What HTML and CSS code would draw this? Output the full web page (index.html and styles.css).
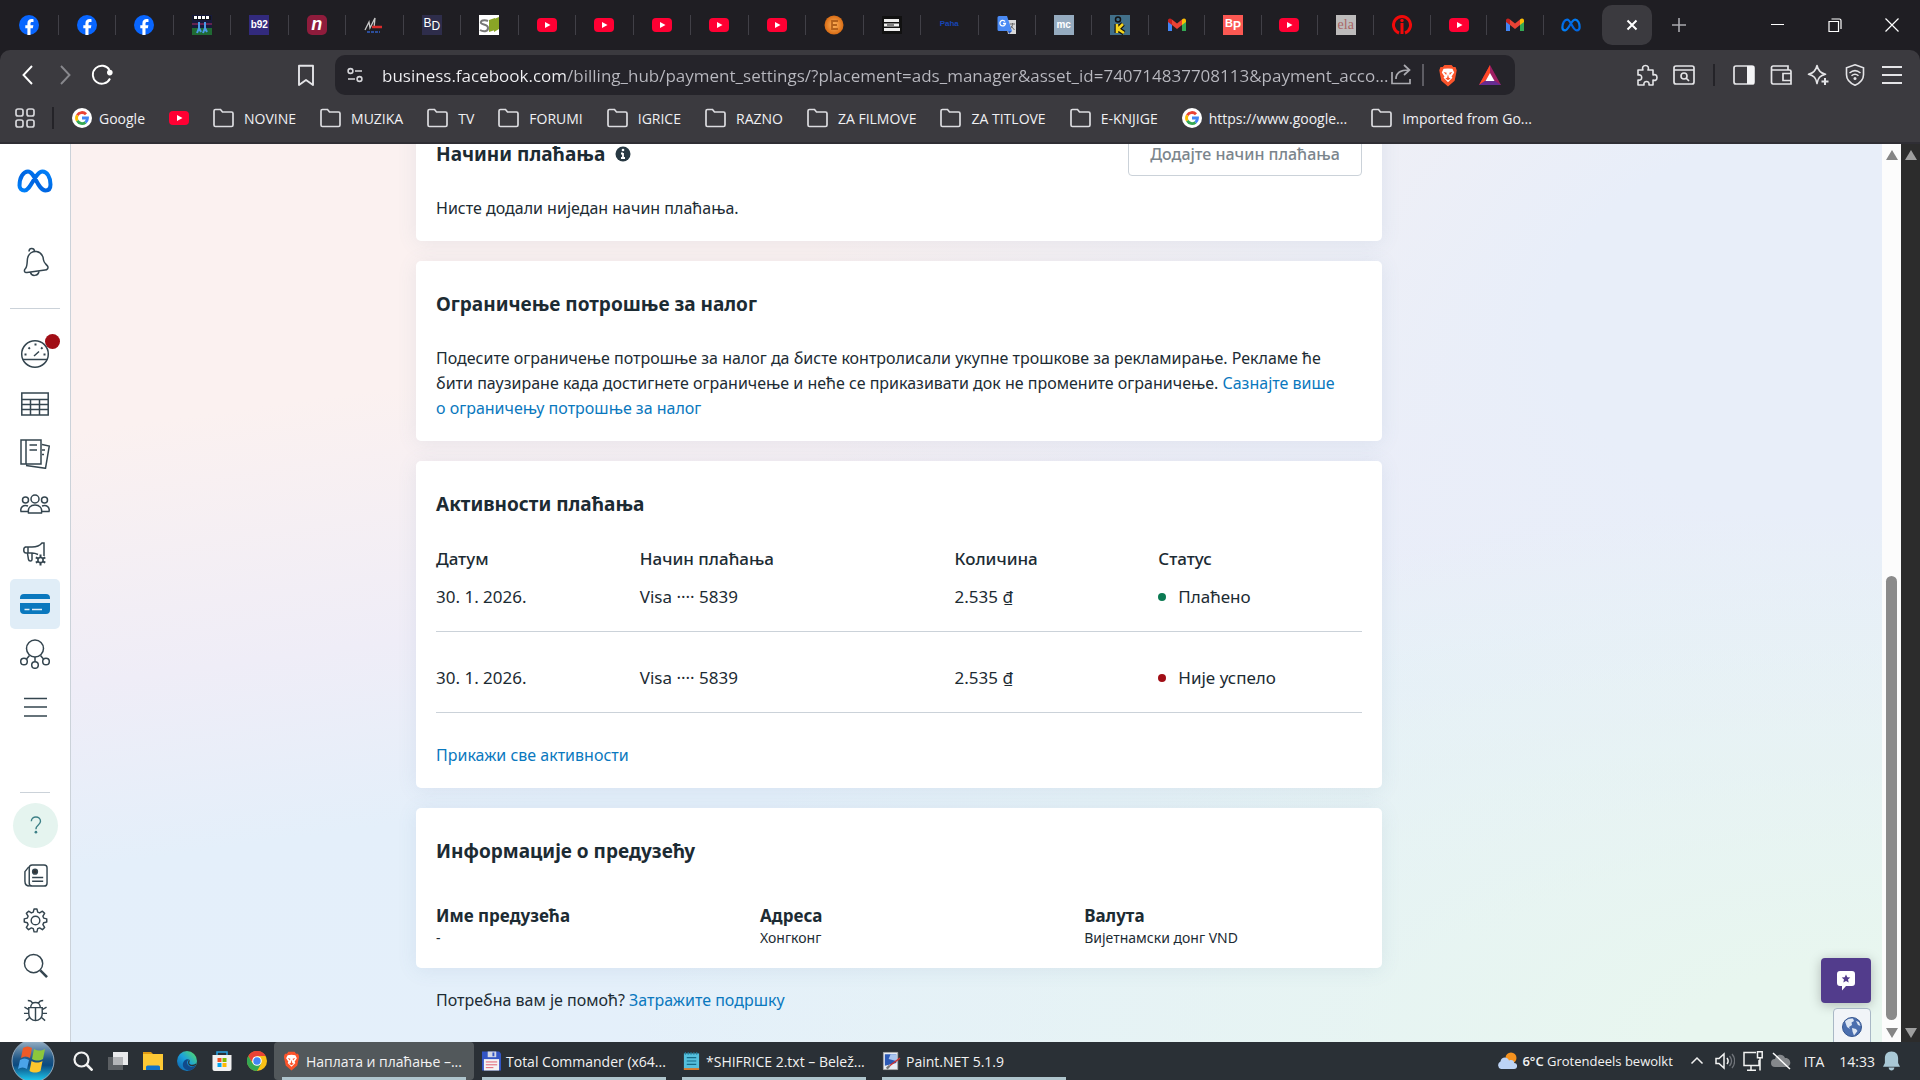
FILE: index.html
```html
<!DOCTYPE html>
<html lang="sr">
<head>
<meta charset="utf-8">
<title>Наплата и плаћање</title>
<meta name="viewport" content="width=device-width, initial-scale=1">
<link rel="stylesheet" href="styles.css">
</head>
<body>
<svg class="defs" aria-hidden="true">
  <defs>
    <linearGradient id="metaGrad" x1="0" y1="1" x2="1" y2="0"><stop offset="0" stop-color="#0082fb"/><stop offset=".45" stop-color="#0064e0"/><stop offset="1" stop-color="#0082fb"/></linearGradient>
    <linearGradient id="orb" x1="0" y1="0" x2="0" y2="1"><stop offset="0" stop-color="#9fb6c9"/><stop offset=".45" stop-color="#1f5685"/><stop offset=".6" stop-color="#0c4a80"/><stop offset="1" stop-color="#1fd3f8"/></linearGradient>
    <linearGradient id="edge" x1="0" y1="1" x2="1" y2="0"><stop offset="0" stop-color="#0c59a4"/><stop offset=".5" stop-color="#1ba0dc"/><stop offset="1" stop-color="#5be35a"/></linearGradient>
    <radialGradient id="orange"><stop offset="0" stop-color="#ffb45c"/><stop offset="1" stop-color="#d96c14"/></radialGradient>
    <symbol id="fb" viewBox="0 0 20 20"><circle cx="10" cy="10" r="10" fill="#0866ff"/><path d="M8.400 20v-6.700H6.300v-3h2.100V8.700c0-3 1.500-4.600 4.400-4.600.7 0 1.300.1 1.700.2v2.600h-1.400c-1.200 0-1.600.6-1.600 1.700v1.700h2.900l-.6 3h-2.300V20z" fill="#fff"/></symbol>
    <symbol id="yt" viewBox="0 0 20 20"><rect y="3" width="20" height="14" rx="4" fill="#ff0033"/><path d="M8 7v6l5.500-3z" fill="#fff"/></symbol>
    <symbol id="gmail" viewBox="0 0 20 20"><path d="M1 5v11h4V9z" fill="#4285f4"/><path d="M15 9v7h4V5z" fill="#34a853"/><path d="M15 4.500V10l4-3V5.500c0-2.300-2.400-2.800-4-1z" fill="#fbbc04"/><path d="M5 10V4.500l5 4 5-4V10l-5 4z" fill="#ea4335"/><path d="M1 5.500C1 3.200 3.400 2.700 5 4.500V10L1 7z" fill="#c5221f"/></symbol>
    <symbol id="goog" viewBox="0 0 20 20"><circle cx="10" cy="10" r="10" fill="#fff"/><g fill="none" stroke-width="2.800"><path d="M14 6.200A5.500 5.500 0 0 0 5.300 7.200" stroke="#ea4335"/><path d="M5.300 7.200a5.500 5.500 0 0 0 0 5.600" stroke="#fbbc04"/><path d="M5.300 12.800a5.500 5.500 0 0 0 8.200 1.500" stroke="#34a853"/><path d="M13.500 14.300A5.500 5.500 0 0 0 15.500 10H10" stroke="#4285f4"/></g></symbol>
    <symbol id="folder" viewBox="0 0 21 20"><path d="M1 17V3a1.500 1.500 0 0 1 1.500-1.500h5L9.500 4h9A1.500 1.500 0 0 1 20 5.500V17a1.500 1.500 0 0 1-1.500 1.500h-16A1.500 1.500 0 0 1 1 17z" fill="none" stroke="#dcdce0" stroke-width="1.700"/></symbol>
    <symbol id="meta" viewBox="0 0 36 24"><path d="M2.500 16.500C2.500 8 6.500 2.500 11 2.500C18 2.500 20.500 21.500 28.500 21.500C32 21.500 33.500 19 33.500 15.500C33.500 8 30 2.500 25.500 2.500C18 2.500 14 21.500 7.500 21.500C4.500 21.500 2.500 19.500 2.500 16.500Z" fill="none" stroke="url(#metaGrad)" stroke-width="4"/></symbol>
    <symbol id="brave" viewBox="0 0 20 26"><path d="M6 1h8l2 2.500h2.500L20 7l-2.500 12L10 25.500 2.500 19 0 7l1.500-3.500H4z" fill="#fb542b"/><path d="M10 5l5 .5 2 4-3 4.500 1 1.500-5 5-5-5 1-1.500-3-4.500 2-4z" fill="#fff"/><path d="M5 9l3.500 1L8 12.500zM15 9l-3.500 1 .5 2.500zM10 11.500l1 4 2 1-3 2-3-2 2-1z" fill="#fb542b"/></symbol>
  </defs>
</svg>

<header class="browser">
  <div class="tabstrip">
    <div class="tabs tabs-a">
      <button class="tab" aria-label="Facebook"><svg><use href="#fb"/></svg></button>
      <button class="tab" aria-label="Facebook"><svg><use href="#fb"/></svg></button>
      <button class="tab" aria-label="Facebook"><svg><use href="#fb"/></svg></button>
      <button class="tab" aria-label="Sport"><svg viewBox="0 0 20 20"><path d="M0 0h20v20H0z" fill="#171a3c"/><path d="M0 13h20v7H0z" fill="#1f6a33"/><path d="M1 1h18v4H1z" fill="#10131a"/><path d="M2 2.500h16" stroke="#fff" stroke-width="3" stroke-dasharray="3 1"/><path d="M0 9h20" stroke="#b02a63"/><path d="M7 7v6l-2 5M7 13l2 4M13 7v6l-2 5m2-5 2 4" stroke="#4b9ae8" stroke-width="2" fill="none"/></svg></button>
      <button class="tab" aria-label="b92"><span class="fav fav-b92">b92</span></button>
      <button class="tab" aria-label="n"><span class="fav fav-n">n</span></button>
      <button class="tab" aria-label="Majstorija"><svg viewBox="0 0 20 20"><path d="M1 15L5 7l1 6 5-10-1 10" fill="none" stroke="#c9c9c9" stroke-width="1.300"/><path d="M8 12h10" stroke="#d92b2b" stroke-width="2.500"/><path d="M3 17h13" stroke="#2c4e9b" stroke-width="2" stroke-dasharray="3 1"/></svg></button>
      <button class="tab" aria-label="BD"><span class="fav fav-bd">B<sub>D</sub></span></button>
      <button class="tab" aria-label="S"><svg viewBox="0 0 20 20"><path d="M0 0h20v20H0z" fill="#fff"/><path d="M10 5l6-2v12l-6 2zM15 4l5-2v12l-5 3z" fill="#8aa526"/><path d="M9 6C5 4 1 6 2 8s7 1 7 5-5 4-8 2" fill="none" stroke="#777" stroke-width="2"/></svg></button>
      <button class="tab" aria-label="YouTube"><svg><use href="#yt"/></svg></button>
      <button class="tab" aria-label="YouTube"><svg><use href="#yt"/></svg></button>
      <button class="tab" aria-label="YouTube"><svg><use href="#yt"/></svg></button>
      <button class="tab" aria-label="YouTube"><svg><use href="#yt"/></svg></button>
      <button class="tab" aria-label="YouTube"><svg><use href="#yt"/></svg></button>
      <button class="tab" aria-label="E"><svg viewBox="0 0 20 20"><circle cx="10" cy="10" r="9.500" fill="url(#orange)"/><path d="M14 6H8v8h6M8 10h5" fill="none" stroke="#b3611c" stroke-width="1.800"/></svg></button>
      <button class="tab" aria-label="Z"><svg viewBox="0 0 20 20"><path d="M0 1h20v18H0z" fill="#111"/><path d="M2 5.500h15M2 14.500h16M2 10h15" stroke="#eee" stroke-width="2.800"/><path d="M5 10h7" stroke="#111"/></svg></button>
      <button class="tab" aria-label="Paha"><span class="fav fav-paha">Paha</span></button>
      <button class="tab" aria-label="Google Translate"><svg viewBox="0 0 20 20"><path d="M8 5h11v14H11z" fill="#d8d8d8"/><path d="M2 1h8l5 15H2a1.500 1.500 0 0 1-1.500-1.500v-12A1.500 1.500 0 0 1 2 1z" fill="#4a8af4"/><path d="M15 16l-3 3-1-3z" fill="#2a5bc0"/><path d="M8 6.500A2.800 2.800 0 1 0 8.500 8.500H6" fill="none" stroke="#fff" stroke-width="1.300"/><path d="M13 9h5m-2.500-1v1.500c0 2-2 4-2 4m.5-2.500l3.500 4" fill="none" stroke="#666"/></svg></button>
    </div>
    <div class="tabs tabs-b">
      <button class="tab" aria-label="MC"><span class="fav fav-mc">mc</span></button>
      <button class="tab" aria-label="K"><svg viewBox="0 0 20 20"><path d="M0 0h20v20H0z" fill="#42708a"/><path d="M7 9v9M13 9l-5 5 6 4" stroke="#111" stroke-width="5" fill="none"/><path d="M7 9v9M13 9l-5 5 6 4" stroke="#f4d51e" stroke-width="2.600" fill="none"/><circle cx="8" cy="4.500" r="2.500" fill="none" stroke="#111" stroke-width="1.500"/></svg></button>
      <button class="tab" aria-label="Gmail"><svg><use href="#gmail"/></svg></button>
      <button class="tab" aria-label="BP"><span class="fav fav-bp">B<sub>P</sub></span></button>
      <button class="tab" aria-label="YouTube"><svg><use href="#yt"/></svg></button>
      <button class="tab" aria-label="ela"><span class="fav fav-ela">ela</span></button>
      <button class="tab" aria-label="i"><svg viewBox="0 0 20 20"><path d="M7 18A8.500 8.500 0 1 1 13 18" fill="none" stroke="#f10a0a" stroke-width="3"/><path d="M10 8v11" stroke="#f10a0a" stroke-width="3"/><circle cx="10" cy="5.500" r="1.700" fill="#f10a0a"/></svg></button>
      <button class="tab" aria-label="YouTube"><svg><use href="#yt"/></svg></button>
      <button class="tab" aria-label="Gmail"><svg><use href="#gmail"/></svg></button>
      <button class="tab" aria-label="Meta"><svg><use href="#meta"/></svg></button>
    </div>
    <button class="tab-active" aria-label="Затвори картицу"><svg viewBox="0 0 12 12"><path d="M1.500 1.500l9 9m0-9l-9 9" stroke="#fff" stroke-width="2"/></svg></button>
    <button class="tab-new" aria-label="Нова картица"><svg viewBox="0 0 14 14"><path d="M7 0v14M0 7h14" stroke="#a9a9ae" stroke-width="1.600"/></svg></button>
    <div class="win">
      <button aria-label="Minimize"><svg viewBox="0 0 14 14"><path d="M0 6.500h13" stroke="#fff"/></svg></button>
      <button aria-label="Restore"><svg viewBox="0 0 14 14"><path d="M1 3.500h9.500v10H1zM3.500 1h8a1.500 1.500 0 0 1 1.500 1.500V11" fill="none" stroke="#fff" stroke-width="1.200"/></svg></button>
      <button aria-label="Close"><svg viewBox="0 0 14 14"><path d="M.5.5l13 13m0-13l-13 13" stroke="#fff" stroke-width="1.200"/></svg></button>
    </div>
  </div>

  <div class="toolbar">
    <div class="nav">
      <button aria-label="Back"><svg viewBox="0 0 22 22"><path d="M15 2L6.500 11 15 20" fill="none" stroke="#fff" stroke-width="1.900"/></svg></button>
      <button aria-label="Forward"><svg viewBox="0 0 22 22"><path d="M7 2l8.500 9L7 20" fill="none" stroke="#88888d" stroke-width="1.900"/></svg></button>
      <button aria-label="Reload"><svg viewBox="0 0 22 22"><path d="M19 14.500A9 9 0 1 1 18.500 6" fill="none" stroke="#fff" stroke-width="1.900"/><circle cx="18.800" cy="8.600" r="2.800" fill="#fff"/></svg></button>
      <button class="mark" aria-label="Bookmark"><svg viewBox="0 0 22 22"><path d="M4 1.800h14V21l-7-5-7 5z" fill="none" stroke="#e4e4e7" stroke-width="1.900" stroke-linejoin="round"/></svg></button>
    </div>
    <div class="address">
      <svg class="tune" viewBox="0 0 16 16"><g fill="none" stroke="#d6d6da" stroke-width="1.600"><circle cx="3.500" cy="4" r="2.400"/><path d="M8 4h7M1 12h7"/><circle cx="12.500" cy="12" r="2.400"/></g></svg>
      <input class="url" type="text" aria-label="Адреса" value="business.facebook.com/billing_hub/payment_settings/?placement=ads_manager&amp;asset_id=740714837708113&amp;payment_acco...">
      <svg class="share" viewBox="0 0 22 22"><path d="M2 8v11.500h18V15M6 15c0-6 4-9 13-9m-5-5l5.500 5-5.500 5" fill="none" stroke="#aaaab0" stroke-width="1.700"/></svg>
      <i class="bar light"></i>
      <svg class="shield" viewBox="0 0 20 26"><use href="#brave"/></svg>
      <svg class="bat" viewBox="0 0 22 20"><path d="M11 0l11 20H0z" fill="#9e1f63"/><path d="M11 0v9l-5 7L0 20z" fill="#ff4724"/><path d="M0 20l6-4h10l6 4z" fill="#662d91"/><path d="M11 8l4.500 8h-9z" fill="#fff"/></svg>
    </div>
    <div class="ext">
      <button aria-label="Extensions"><svg viewBox="0 0 22 22"><path d="M2 6h5c-1.200-2.500 0-4.500 2.500-4.500S13.200 3.500 12 6h5v5c2.500-1 4 .2 4 2.500S19.500 17 17 16v5h-4c.5-2.500-1-3.500-2.500-3.500S7.500 18.500 8 21H2v-5c2.500.6 3.700-.6 3.700-2.500S4.500 10.500 2 11z" fill="none" stroke="#e4e4e7" stroke-width="1.600" stroke-linejoin="round"/></svg></button>
      <button aria-label="Search"><svg viewBox="0 0 22 22"><rect x="1" y="2" width="20" height="18" rx="2" fill="none" stroke="#e4e4e7" stroke-width="1.700"/><path d="M1 6h20M13 14l3 3" stroke="#e4e4e7" stroke-width="1.700"/><circle cx="11" cy="12" r="3" fill="none" stroke="#e4e4e7" stroke-width="1.600"/></svg></button>
      <i class="bar dark"></i>
      <button aria-label="Sidebar"><svg viewBox="0 0 22 22"><rect x="1" y="2" width="20" height="18" rx="2" fill="none" stroke="#e4e4e7" stroke-width="1.700"/><path d="M14 2h7v18h-7z" fill="#f4f4f6"/></svg></button>
      <button aria-label="Wallet"><svg viewBox="0 0 22 22"><path d="M1.500 6h18A1.500 1.500 0 0 1 21 7.500V20H3a1.800 1.800 0 0 1-1.500-1.500V4A1.800 1.800 0 0 1 3 2h15v4M21 9.500h-8v7h8" fill="none" stroke="#e4e4e7" stroke-width="1.700"/></svg></button>
      <button aria-label="Leo"><svg viewBox="0 0 22 22"><path d="M10 1.500c1 5 3 7.500 8.500 8.800C13 11.600 11 14 10 19.500 9 14 7 11.600 1.500 10.300 7 9 9 6.500 10 1.500z" fill="none" stroke="#e4e4e7" stroke-width="1.600" stroke-linejoin="round"/><path d="M18 14v7m-3.500-3.500h7" stroke="#e4e4e7" stroke-width="2"/></svg></button>
      <button aria-label="VPN"><svg viewBox="0 0 22 22"><path d="M11 .8l8.500 3v7c0 5-4 8.500-8.500 10.500C6.500 19.300 2.500 15.800 2.500 10.800v-7z" fill="none" stroke="#e4e4e7" stroke-width="1.600"/><path d="M5.500 9c3.500-3 7.500-3 11 0M7.500 11.800c2.200-2 4.800-2 7 0" fill="none" stroke="#e4e4e7" stroke-width="1.500"/><circle cx="11" cy="14.500" r="1.500" fill="#e4e4e7"/></svg></button>
      <button aria-label="Menu"><svg viewBox="0 0 22 22"><path d="M1 3h20M1 11h20M1 19h20" stroke="#e4e4e7" stroke-width="2"/></svg></button>
    </div>
  </div>

  <nav class="bookmarks">
    <button class="apps" aria-label="Apps"><svg viewBox="0 0 20 20"><g fill="none" stroke="#d6d6da" stroke-width="1.700"><rect x="1" y="1" width="7" height="7" rx="2"/><rect x="12" y="1" width="7" height="7" rx="2"/><rect x="1" y="12" width="7" height="7" rx="2"/><rect x="12" y="12" width="7" height="7" rx="2"/></g></svg></button>
    <i class="bar dark"></i>
    <a class="near" href="#"><svg class="w20"><use href="#goog"/></svg>Google</a>
    <a href="#" aria-label="YouTube"><svg class="w20"><use href="#yt"/></svg></a>
    <a href="#"><svg><use href="#folder"/></svg>NOVINE</a>
    <a href="#"><svg><use href="#folder"/></svg>MUZIKA</a>
    <a href="#"><svg><use href="#folder"/></svg>TV</a>
    <a href="#"><svg><use href="#folder"/></svg>FORUMI</a>
    <a href="#"><svg><use href="#folder"/></svg>IGRICE</a>
    <a href="#"><svg><use href="#folder"/></svg>RAZNO</a>
    <a href="#"><svg><use href="#folder"/></svg>ZA FILMOVE</a>
    <a href="#"><svg><use href="#folder"/></svg>ZA TITLOVE</a>
    <a href="#"><svg><use href="#folder"/></svg>E-KNJIGE</a>
    <a class="near" href="#"><svg class="w20"><use href="#goog"/></svg>https://www.google...</a>
    <a href="#"><svg><use href="#folder"/></svg>Imported from Go...</a>
  </nav>
</header>

<div class="viewport">
  <nav class="side">
    <a class="logo" href="#" aria-label="Meta"><svg class="meta-logo"><use href="#meta"/></svg></a>
    <button class="bell" aria-label="Обавештења"><svg viewBox="0 0 30 30"><path d="M9 4.500c0-4 5-4 5.500-.5M7 25.500c-2.500.5-3.500-2-1.500-4 2-2 1.500-7 2-10C8.500 6 13 4 16.500 4.500c4 .6 6.500 4 7 8.500.4 3 2.500 4 4 6 1.300 2-.2 4-2.500 4zM10.500 25.500c1 4 7.500 4 8.500-1"/></svg></button>
    <hr class="rule">
    <button class="item" aria-label="Преглед"><svg viewBox="0 0 30 30"><circle cx="15" cy="15" r="13.300"/><path d="M2.500 20.500h25M14 17l5-4.500"/><path d="M15.500 4.500v2M8.500 8.500l1.400 1.400M22.500 8.500l-1.400 1.400M4.500 15.500h2M23.500 15.500h2" stroke-width="2"/></svg><span class="dot"></span></button>
    <button class="item" aria-label="Кампање"><svg viewBox="0 0 30 30"><path d="M1.800 4h26.400v22H1.800zM2 10.500h26M2 15.500h26M2 20.500h26M10.500 10.500V26M19.500 10.500V26"/></svg></button>
    <button class="item" aria-label="Извештаји"><svg viewBox="0 0 30 30"><path d="M1 1h20v24H1zM6 1v24M9.500 6h7.500M9.500 11h7.500M22 5.500l7.300 1.500L25.500 29.300 6 26.500M22 11h3M22 15.500h2"/></svg></button>
    <button class="item" aria-label="Публика"><svg viewBox="0 0 30 30"><circle cx="15" cy="10" r="4"/><circle cx="5.500" cy="11" r="3"/><circle cx="24.500" cy="11" r="3"/><path d="M8.500 24c-1-5 2-8 6.500-8s7.500 3 6.500 8zM8 22.500H1c-1-4 2-7 7-5.500M22 22.500h7c1-4-2-7-7-5.500"/></svg></button>
    <button class="item" aria-label="Огласи"><svg viewBox="0 0 30 30"><path d="M5 8h7c5 0 8-1.500 10-4h2v13M18 15.500C16 14.500 14 14 12 14H6c-3 0-3-6 0-6M8 8v6M7.500 14.500l1 6c.4 2 3.500 2 3.500 0v-6"/><circle cx="20.500" cy="21" r="2.600"/><path d="M20.500 15.500v3M20.500 23.500v3M15.800 18.300l2.500 1.400M22.800 22.300l2.500 1.400M15.800 23.700l2.500-1.400M22.800 19.700l2.500-1.400" stroke-width="2"/></svg></button>
    <button class="item current" aria-label="Наплата"><svg viewBox="0 0 30 30"><path d="M4 5h22a4 4 0 0 1 4 4v1H0V9a4 4 0 0 1 4-4zM0 14h30v7a4 4 0 0 1-4 4H4a4 4 0 0 1-4-4z" fill="#0a78be" stroke="none"/><path d="M4.500 20.500h5M12 20.500h10" stroke="#e0edf7"/></svg></button>
    <button class="item" aria-label="Догађаји"><svg viewBox="0 0 30 30"><circle cx="15" cy="9.500" r="8.500"/><circle cx="4" cy="22.500" r="3.300"/><circle cx="26" cy="22.500" r="3.300"/><circle cx="15" cy="26" r="3.300"/><path d="M9.500 16.500L6.500 20M20.500 16.500l3 3.500M15 18v4.500"/></svg></button>
    <button class="item" aria-label="Сви алати"><svg viewBox="0 0 30 30"><path d="M4 9.500h23M4 18h23M4 27h23"/></svg></button>
    <div class="side-end">
      <hr class="rule short">
      <button class="help" aria-label="Помоћ"><svg viewBox="0 0 30 30"><path d="M10 10c0-7 11-7 11 0 0 4.500-5.500 4.500-5.500 9.500" stroke="#3d8087" stroke-width="1.700"/><circle cx="15.500" cy="23" r="1.600" fill="#3d8087" stroke="none"/></svg></button>
      <button aria-label="Новости"><svg viewBox="0 0 26 26"><rect x="6.500" y="2" width="18.500" height="22" rx="3"/><path d="M6 4L2 9v10c0 3 2 5 5 5M9.500 15H21M9.500 19H21"/><circle cx="12.500" cy="9" r="2.500" fill="#333"/></svg></button>
      <button aria-label="Подешавања"><svg viewBox="0 0 26 26"><circle cx="13" cy="13" r="4.500"/><path d="M11.500 1h3l.8 3.300 2 .8 2.900-1.800 2.300 2.300-1.800 2.900.8 2 3.200.8v3.200l-3.200.8-.8 2 1.800 2.900-2.300 2.300-2.900-1.800-2 .8-.8 3.300h-3l-.8-3.300-2-.8-2.900 1.800-2.300-2.300 1.800-2.900-.8-2-3.200-.8v-3.200l3.200-.8.8-2-1.800-2.900 2.300-2.300 2.900 1.800 2-.8z" stroke-linejoin="round"/></svg></button>
      <button aria-label="Претрага"><svg viewBox="0 0 26 26"><circle cx="11" cy="11" r="9.500"/><path d="M18 18l7 7" stroke-width="2.600"/></svg></button>
      <button aria-label="Пријавите проблем"><svg viewBox="0 0 26 26"><path d="M6 10h14v6c0 10-14 10-14 0zM8 10c0-7 10-7 10 0M13 10v13M10 5.500C9 3 7 2.500 5 2.500M16 5.500c1-2.500 3-3 5-3M6 12L1.500 9.500M6 16H1M7 20l-4 3.500M20 12l4.500-2.500M20 16h5M19 20l4 3.500"/></svg></button>
    </div>
  </nav>

  <main class="scene">
    <div class="column">
      <section class="card">
        <header><h2>Начини плаћања</h2><svg class="info" viewBox="0 0 16 16"><circle cx="8" cy="8" r="7.500" fill="#283943"/><path d="M8 7v5M6 7.500h2M6 12h4" stroke="#fff" stroke-width="1.800"/><circle cx="8" cy="4" r="1.300" fill="#fff"/></svg><button class="add">Додајте начин плаћања</button></header>
        <p>Нисте додали ниједан начин плаћања.</p>
      </section>
      <section class="card">
        <header><h2>Ограничење потрошње за налог</h2></header>
        <p>Подесите ограничење потрошње за налог да бисте контролисали укупне трошкове за рекламирање. Рекламе ће<br>бити паузиране када достигнете ограничење и неће се приказивати док не промените ограничење. <a href="#">Сазнајте више<br>о ограничењу потрошње за налог</a></p>
      </section>
      <section class="card">
        <header><h2>Активности плаћања</h2></header>
        <table>
          <thead><tr><th>Датум</th><th class="c-method">Начин плаћања</th><th>Количина</th><th>Статус</th></tr></thead>
          <tbody>
            <tr class="first"><td>30. 1. 2026.</td><td>Visa ···· 5839</td><td>2.535 ₫</td><td><span class="status paid">Плаћено</span></td></tr>
            <tr><td>30. 1. 2026.</td><td>Visa ···· 5839</td><td>2.535 ₫</td><td><span class="status failed">Није успело</span></td></tr>
          </tbody>
        </table>
        <a class="all" href="#">Прикажи све активности</a>
      </section>
      <section class="card">
        <header><h2>Информације о предузећу</h2></header>
        <dl class="facts">
          <div><dt>Име предузећа</dt><dd>-</dd></div>
          <div><dt>Адреса</dt><dd>Хонгконг</dd></div>
          <div><dt>Валута</dt><dd>Вијетнамски донг VND</dd></div>
        </dl>
      </section>
      <p class="support">Потребна вам је помоћ? <a href="#">Затражите подршку</a></p>
    </div>
  </main>
  <div class="float">
    <button class="chat" aria-label="Повратне информације"><svg viewBox="0 0 18 20"><path d="M3 0h12a3 3 0 0 1 3 3v9a3 3 0 0 1-3 3h-6l-4 4.500V15H3a3 3 0 0 1-3-3V3a3 3 0 0 1 3-3z" fill="#fff"/><path d="M9 3.500l1.300 2.800 3 .3-2.300 2 .7 3L9 10l-2.700 1.600.7-3-2.300-2 3-.3z" fill="#523c8c"/></svg></button>
    <button class="globe" aria-label="Језик"><svg viewBox="0 0 20 20"><circle cx="10" cy="10" r="9.500" fill="#4a6eae" stroke="#35558f"/><path d="M3 4.500C5 2 8 1 11 1.500L12 4 9.500 5.500 10 8l-3 2 1 2-3-2zM10 11l4 1 1.500 2-3.500 4.500-1.500-4zM14 4l3 1 1.500 4-2.500-1z" fill="#dde6f3"/></svg></button>
  </div>
  <div class="scroll scroll-inner"><i class="up"></i><i class="thumb"></i><i class="down"></i></div>
  <div class="scroll scroll-outer"><i class="up"></i><i class="down"></i></div>
</div>

<footer class="taskbar">
  <button class="orb" aria-label="Start"><svg viewBox="0 0 44 44"><circle cx="22" cy="22" r="21" fill="url(#orb)" stroke="#93a9bd"/><path d="M12 9c3-2 6-2 9 0l-2 10c-3-2-6-2-9 0z" fill="#ee5a28"/><path d="M23 10c4 2 7 2 11 0l-2 10c-4 2-7 2-11 0z" fill="#8cc63c"/><path d="M9 21c3-2 6-2 9 0l-2 9c-3-2-6-2-9 0z" fill="#4aa3e8"/><path d="M20.500 22c4 2 7 2 11 0l-2 10c-4 2-7 2-11 0z" fill="#fcc62d"/></svg></button>
  <div class="pins">
    <button aria-label="Search"><svg viewBox="0 0 20 20"><circle cx="8.500" cy="8.500" r="7" fill="none" stroke="#f2f2f2" stroke-width="2.200"/><path d="M13.500 13.500l6 6" stroke="#f2f2f2" stroke-width="2.600"/></svg></button>
    <button aria-label="Task view"><svg viewBox="0 0 20 20"><path d="M0 6h15v13H0z" fill="#5b5f63"/><path d="M5 1h15v13H5z" fill="#e9eaec"/><path d="M5 6h10v8H5z" fill="#b3b5b8"/></svg></button>
    <button aria-label="Explorer"><svg viewBox="0 0 20 20"><path d="M0 1h8l2 2H0z" fill="#e19b12"/><path d="M0 3h20v16H0z" fill="#fdc935"/><path d="M3 19v-3a1.500 1.500 0 0 1 1.500-1.500h11A1.500 1.500 0 0 1 17 16v3z" fill="#1173c7"/></svg></button>
    <button aria-label="Edge"><svg viewBox="0 0 20 20"><circle cx="10" cy="10" r="10" fill="url(#edge)"/><path d="M12 19.500C6 19 4 13 7.500 9.500 9 8 11 8 12 8.500c-2 1-2.500 4-.5 6 2 1.800 5 1.500 7.500-.5-1 3-4 5.500-7 5.500z" fill="#114a8b"/><path d="M12 8.500c1.300 1 .3 2.500.2 3.500.3 2 4 2.500 6.800.5.700 1 .2 1.500-.8 2-3 1.500-6.500.5-7-2-.3-1.600.3-3 .8-4z" fill="#2a3036"/></svg></button>
    <button aria-label="Store"><svg viewBox="0 0 20 20"><path d="M5 5V1h10v4" fill="none" stroke="#28a3e3" stroke-width="1.500"/><path d="M.5 4h19v14a2 2 0 0 1-2 2h-15a2 2 0 0 1-2-2z" fill="#f1f1f1"/><path d="M5.500 7H9.500v4h-4z" fill="#f25022"/><path d="M10.500 7h4v4h-4z" fill="#7fba00"/><path d="M5.500 12H9.500v4h-4z" fill="#00a4ef"/><path d="M10.500 12h4v4h-4z" fill="#ffb900"/></svg></button>
    <button aria-label="Chrome"><svg viewBox="0 0 20 20"><circle cx="10" cy="10" r="10" fill="#fbc116"/><path d="M1.300 5A10 10 0 0 1 18.700 5H10v5H4.200z" fill="#ea4335"/><path d="M1.300 5A10 10 0 0 0 10 20l4.300-7.500H5.700z" fill="#34a853"/><circle cx="10" cy="10" r="4.800" fill="#fff"/><circle cx="10" cy="10" r="3.700" fill="#4285f4"/></svg></button>
  </div>
  <div class="apps-open">
    <button class="app on"><svg viewBox="0 0 20 26"><use href="#brave"/></svg><span>Наплата и плаћање –...</span></button>
    <button class="app"><svg viewBox="0 0 20 20"><path d="M0 0h18l2 2v18H0z" fill="#3355c4"/><path d="M6 0h9v6H6z" fill="#d4d8e4"/><path d="M11 1h2v4h-2z" fill="#3355c4"/><path d="M2 8h16v12H2z" fill="#f4f4f4"/><path d="M4 11h12M4 14h12M4 17h8" stroke="#e05a6a"/></svg><span>Total Commander (x64...</span></button>
    <button class="app"><svg viewBox="0 0 20 20"><path d="M2 2h16v17H2z" fill="#54bfdc"/><path d="M2 18.500h16" stroke="#d97a2b" stroke-width="2"/><path d="M5 6.500h10M5 10h10M5 13.500h10" stroke="#146a87" stroke-width="1.300"/><path d="M3 2h14" stroke="#1f7b9b" stroke-width="3" stroke-dasharray="1 2"/></svg><span>*SHIFRICE 2.txt – Belež...</span></button>
    <button class="app"><svg viewBox="0 0 20 20"><path d="M1.500 1h15v18h-15z" fill="#e8edf5" stroke="#aaa"/><path d="M3 3h12v9l-12 3z" fill="#2c59b5"/><path d="M9 3h6v7l-8-2z" fill="#a9c4ee"/><path d="M19 7L8 15" stroke="#c33" stroke-width="1.500"/><path d="M8 15l-3 3" stroke="#777" stroke-width="2.500"/></svg><span>Paint.NET 5.1.9</span></button>
  </div>
  <div class="tray">
    <button class="weather"><svg viewBox="0 0 20 18"><circle cx="14" cy="6" r="5.500" fill="#f5921e"/><path d="M4 17a4 4 0 0 1-.5-7.500C4 5 10 4 12 8.500c3-1 5 0 5.200 2.500A3 3 0 0 1 17 17z" fill="#bcd3f5"/></svg><span><b>6°C</b> Grotendeels bewolkt</span></button>
    <button class="t-up" aria-label="Hidden icons"><svg viewBox="0 0 20 20"><path d="M4.500 12.500L10 7l5.500 5.500" fill="none" stroke="#f2f2f2" stroke-width="1.500"/></svg></button>
    <button aria-label="Volume"><svg viewBox="0 0 20 20"><path d="M1 7.500h3L9 3v14l-5-4.500H1z" fill="none" stroke="#f2f2f2" stroke-width="1.500"/><path d="M12 7c1.500 2 1.500 4 0 6" fill="none" stroke="#f2f2f2" stroke-width="1.500"/><path d="M14.500 5c2.500 3 2.500 7 0 10M17 3c3.500 4 3.500 10 0 14" fill="none" stroke="#70747a" stroke-width="1.300"/></svg></button>
    <button aria-label="Network"><svg viewBox="0 0 20 20"><path d="M13 1.500H1v13h15V9M8 14.500V19M4 19.200h9M14.500.8h4.700v6h-4.700zM17 7v12.500" fill="none" stroke="#f2f2f2" stroke-width="1.500"/></svg></button>
    <button aria-label="OneDrive"><svg viewBox="0 0 20 20"><path d="M4 16a4 4 0 0 1 0-8c1-5 8-6 10-1 5-1 8 7 2 9z" fill="#85888c"/><path d="M2 2l17 16" stroke="#fff" stroke-width="1.500"/></svg></button>
    <span class="lang">ITA</span><time>14:33</time>
    <button class="t-bell" aria-label="Notifications"><svg viewBox="0 0 18 20"><path d="M9 0c5 0 7 3.500 7 7v5l2 4H0l2-4V7c0-3.500 2-7 7-7zM6 17h6c0 4-6 4-6 0z" fill="#a9c8d6"/></svg></button>
  </div>
</footer>
</body>
</html>
```
FILE: styles.css
```css
* { box-sizing: border-box; }

body {
  margin: 0;
  height: 100vh;
  display: flex;
  flex-direction: column;
  overflow: hidden;
  font-family: "Noto Sans", "Open Sans", sans-serif;
  font-size: 16px;
  line-height: 25px;
  color: #1c2b33;
}

button {
  border: 0;
  padding: 0;
  margin: 0;
  background: none;
  font: inherit;
  color: inherit;
  display: flex;
  align-items: center;
  justify-content: center;
}

a { color: #0a78be; text-decoration: none; }
h2, p, dl, dd { margin: 0; }
svg { display: block; flex: none; }
.defs { position: absolute; width: 0; height: 0; }

/* Browser chrome */
.browser {
  flex: none;
  background: #1f1e23;
  color: #f0f0f3;
  font-family: "Open Sans", "Noto Sans", sans-serif;
}
.tabstrip { display: flex; height: 50px; align-items: center; padding-left: 1px; }
.tabs { display: flex; min-width: 0; }
.tabs-a { flex: 1035 1 0; }
.tabs-b { flex: 564 1 0; }
.tab {
  flex: 1 1 0;
  height: 20px;
  border-right: 1px solid #414047;
}
.tabs-b .tab:last-child { border-right-color: transparent; }
.tab svg { width: 20px; height: 20px; }
.fav {
  width: 20px;
  height: 20px;
  line-height: 20px;
  font-family: "Liberation Sans", sans-serif;
  font-size: 10px;
  color: #fff;
  text-align: center;
}
.fav-b92 { background: #322a7d; font-weight: bold; }
.fav-n { background: #8f1c3c; border-radius: 5px; font-size: 18px; line-height: 18px; font-weight: bold; font-style: italic; }
.fav-bd { background: #2e2d4b; font-size: 12px; line-height: 16px; }
.fav sub { font-size: 12px; line-height: 0; }
.fav-paha { color: #1745b5; font-size: 8px; line-height: 18px; font-weight: bold; }
.fav-mc { background: #95abbf; font-weight: bold; }
.fav-bp { background: #fb5852; font-size: 11px; line-height: 16px; font-weight: bold; }
.fav-ela { background: #bdbbbb; color: #a66; font-family: "Liberation Serif", serif; font-size: 14px; }
.tab-active {
  width: 50px;
  height: 40px;
  margin-left: 2px;
  border-radius: 10px;
  background: #3b3a3f;
  padding-left: 10px;
}
.tab-active svg { width: 12px; height: 12px; }
.tab-new { width: 54px; height: 40px; }
.tab-new svg { width: 14px; height: 14px; }
.win { display: flex; margin-left: 43px; }
.win button { width: 57px; height: 40px; }
.win svg { width: 14px; height: 14px; }

.toolbar {
  display: flex;
  align-items: center;
  height: 50px;
  padding: 0 17px;
  background: #3b3a3f;
  border-radius: 10px 10px 0 0;
}
.nav { display: flex; gap: 15px; width: 318px; }
.nav button, .ext button { width: 22px; height: 22px; }
.nav svg, .ext svg { width: 22px; height: 22px; }
.nav .mark { margin-left: auto; margin-right: 18px; }
.address {
  flex: 1;
  min-width: 0;
  display: flex;
  align-items: center;
  height: 40px;
  border-radius: 10px;
  background: #25242a;
  padding: 0 14px 0 12px;
}
.tune { width: 16px; height: 16px; flex: none; }
.url {
  flex: 1;
  min-width: 0;
  height: 30px;
  margin: 0 2px 0 19px;
  border: 0;
  padding: 0;
  background: linear-gradient(90deg, #f2f2f5 184px, #b9b9c0 184px);
  background-clip: text;
  -webkit-background-clip: text;
  color: transparent;
  font-family: inherit;
  font-size: 17px;
}
.share { width: 22px; height: 22px; }
.bar { width: 2px; height: 22px; flex: none; }
.bar.light { background: #5d5c63; margin: 0 14px 0 10px; }
.bar.dark { background: #242328; }
.shield { width: 20px; height: 23px; }
.bat { width: 22px; height: 20px; margin-left: 21px; }
.ext { display: flex; align-items: center; gap: 15px; margin-left: 121px; }
.ext .bar { margin: 0 3px; }

.bookmarks {
  display: flex;
  align-items: center;
  gap: 24px;
  height: 44px;
  padding: 0 15px 6px;
  background: #3b3a3f;
  border-bottom: 2px solid #2f2e34;
  font-size: 14px;
}
.bookmarks svg { width: 21px; height: 20px; }
.bookmarks .w20, .apps svg { width: 20px; }
.bookmarks a { display: flex; align-items: center; gap: 10px; color: #f0f0f3; white-space: nowrap; }
.bookmarks .near { gap: 7px; }
.bookmarks .bar { margin: 0 -6px 0 -7px; }

/* Page */
.viewport { flex: 1; min-height: 0; display: flex; position: relative; overflow: hidden; }
.side {
  width: 71px;
  flex: none;
  display: flex;
  flex-direction: column;
  align-items: center;
  background: #fff;
  border-right: 1px solid #cbd2d9;
}
.side svg { width: 30px; height: 30px; fill: none; stroke: #34454f; stroke-width: 1.500; }
.side .meta-logo { width: 36px; height: 24px; }
.logo { padding-top: 25px; }
.bell { height: 50px; margin-top: 44px; }
.rule { width: 50px; height: 1px; margin: 21px 0 20px; border: 0; background: #cbd2d9; }
.rule.short { width: 30px; margin: 0 0 10px; }
.item { position: relative; width: 50px; height: 50px; border-radius: 5px; flex: none; }
.item.current { background: #e0edf7; }
.dot { position: absolute; top: 5px; right: 0; width: 15px; height: 15px; border-radius: 50%; background: #a10e16; }
.side-end { margin-top: auto; padding-bottom: 9px; display: flex; flex-direction: column; align-items: center; }
.side-end button { width: 45px; height: 45px; }
.side-end svg { width: 25px; height: 25px; }
.side-end .help { border-radius: 50%; background: #e5f4ef; margin-bottom: 5px; }

.scene {
  flex: 1;
  min-width: 0;
  overflow: hidden;
  display: grid;
  grid-template-columns: 345fr minmax(0, 966px) 500fr;
  background:
    radial-gradient(ellipse 70% 60% at 100% 100%, #e8f6ef 15%, #e5f4f300 100%),
    radial-gradient(ellipse 60% 75% at 100% 20%, #e8eef9 30%, #e6eef900 100%),
    linear-gradient(172deg, #fbf1f0 25%, #efedf7 47%, #e4effa 63%, #e4f0fa 100%);
}
.column { grid-column: 2; margin-top: -33px; }
.card {
  margin-bottom: 20px;
  padding: 20px;
  background: #fff;
  border-radius: 5px;
  box-shadow: 0 2px 20px #5078a01a;
}
.card header { display: flex; align-items: center; height: 45px; margin-bottom: 20px; }
h2 { font-size: 19px; line-height: 20px; font-weight: 700; }
.info { width: 16px; height: 16px; margin-left: 10px; }
.add {
  margin-left: auto;
  width: 234px;
  height: 45px;
  line-height: 20px;
  border: 1px solid #cbd2d9;
  border-radius: 4px;
  color: #7b858c;
  font-weight: 500;
}
table { width: 100%; table-layout: fixed; border-collapse: collapse; font-size: 17px; }
th, td { padding: 0; text-align: left; }
th { font-weight: 500; width: 22%; }
.c-method { width: 34%; }
td { padding: 33px 0 22px; border-bottom: 1px solid #cbd2d9; }
.first td { padding-top: 13px; }
.status { display: flex; align-items: center; gap: 12px; }
.status::before { content: ""; width: 8px; height: 8px; border-radius: 50%; background: #a10e16; }
.paid::before { background: #0b7a53; }
.all { display: block; margin-top: 30px; }
.facts { display: grid; grid-template-columns: 35% 35% 30%; padding-top: 10px; }
dt { font-weight: 700; font-size: 17px; }
dd { font-size: 14px; line-height: 20px; }
.support { padding-left: 20px; }

.float { position: absolute; right: 49px; bottom: -4px; display: flex; flex-direction: column; align-items: flex-end; gap: 5px; }
.chat { width: 50px; height: 45px; border-radius: 4px; background: #523c8c; box-shadow: 0 2px 12px #00000040; }
.chat svg { width: 18px; height: 20px; }
.globe { width: 38px; height: 38px; border: 1px solid #a9b8c6; border-radius: 4px; background: #f1f4f8; }
.globe svg { width: 20px; height: 20px; }

.scroll { width: 19px; flex: none; display: flex; flex-direction: column; align-items: center; padding: 6px 0 4px; }
.scroll-inner { background: #fcfcfc; color: #858585; }
.scroll-outer { background: #2c2c2c; color: #9f9f9f; }
.up, .down { width: 0; height: 0; border: 6px solid transparent; }
.up { border-top-width: 0; border-bottom: 10px solid; }
.down { border-bottom-width: 0; border-top: 10px solid; margin-top: auto; }
.thumb { width: 11px; height: 50%; margin-top: auto; border-radius: 6px; background: #8b8b8b; }
.thumb + .down { margin-top: 8px; }

/* Taskbar */
.taskbar {
  flex: none;
  display: flex;
  height: 38px;
  background: #2a3036;
  color: #f2f2f2;
  font-family: "Open Sans", "Noto Sans", sans-serif;
  font-size: 14px;
  overflow: hidden;
}
.orb { width: 66px; }
.orb svg { width: 44px; height: 44px; }
.pins { display: flex; width: 208px; }
.pins button { width: 35px; }
.pins svg { width: 20px; height: 20px; }
.apps-open { display: flex; flex: 1; }
.app {
  width: 200px;
  justify-content: flex-start;
  gap: 5px;
  padding: 0 8px;
  white-space: nowrap;
  border-radius: 4px;
  background: linear-gradient(#afc5cd, #afc5cd) center bottom / 184px 3px no-repeat;
}
.app.on { background-color: #52585b; }
.app svg { width: 19px; height: 20px; }
.tray { display: flex; align-items: center; padding-right: 20px; gap: 8px; }
.tray svg { width: 20px; height: 20px; }
.weather { gap: 5px; white-space: nowrap; font-size: 13px; }
.weather b { font-weight: 600; }
.t-up { margin-left: 6px; }
.lang { margin-left: 5px; }
.tray time { margin-left: 7px; }
.tray .t-bell svg { width: 17px; height: 20px; }
```
